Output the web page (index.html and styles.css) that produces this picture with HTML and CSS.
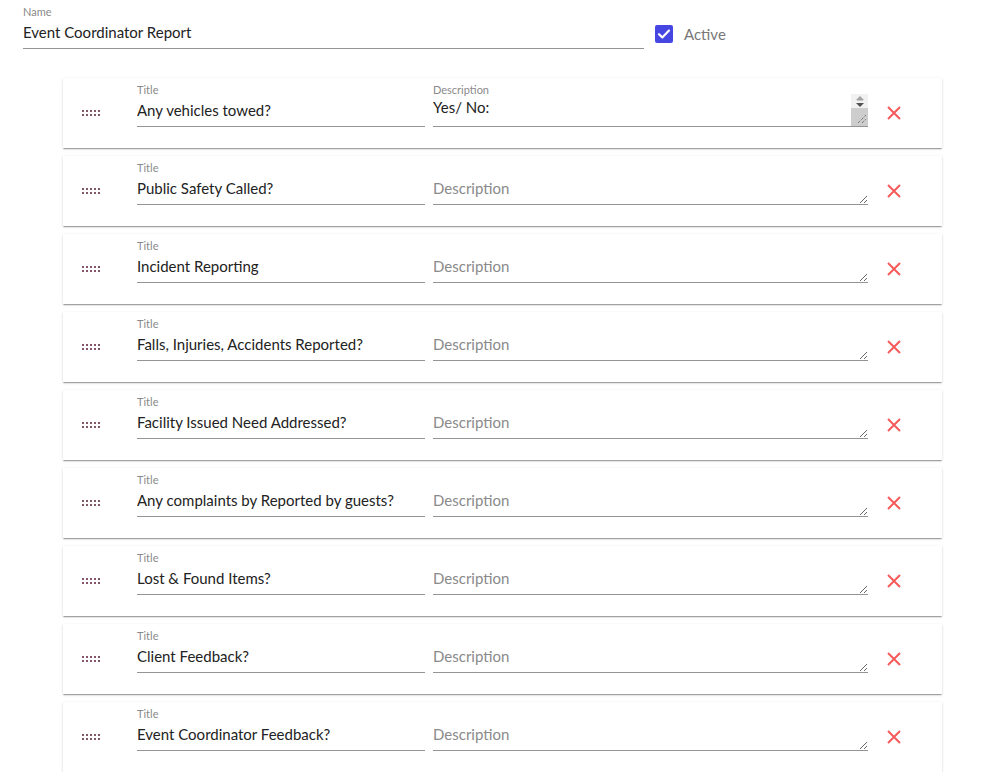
FILE: index.html
```html
<!DOCTYPE html>
<html lang="en">
<head>
  <meta charset="UTF-8">
  <meta name="viewport" content="width=device-width, initial-scale=1.0">
  <title>Event Coordinator Report</title>
  <link rel="stylesheet" href="styles.css">
</head>
<body>
<div class="header">
  <div class="field name-field">
    <label class="field-label" for="name">Name</label>
    <input id="name" class="field-input" type="text" value="Event Coordinator Report">
  </div>
  <label class="active-toggle">
    <span class="checkbox">
      <svg viewBox="0 0 18 18" width="18" height="18"><path d="M4 9.2l3.3 3.2L14 5.6" fill="none" stroke="#fff" stroke-width="2.2" stroke-linecap="round" stroke-linejoin="round"/></svg>
    </span>
    <span class="active-text">Active</span>
  </label>
</div>

<div class="question-list" id="questions"></div>

<script>
  // Domande del report
  const questions = [
    { title: "Any vehicles towed?", description: "Yes/ No:", scroll: true },
    { title: "Public Safety Called?", description: "" },
    { title: "Incident Reporting", description: "" },
    { title: "Falls, Injuries, Accidents Reported?", description: "" },
    { title: "Facility Issued Need Addressed?", description: "" },
    { title: "Any complaints by Reported by guests?", description: "" },
    { title: "Lost & Found Items?", description: "" },
    { title: "Client Feedback?", description: "" },
    { title: "Event Coordinator Feedback?", description: "" },
  ];

  const list = document.getElementById("questions");

  const scrollbar = `
    <div class="fake-scrollbar">
      <div class="scroll-buttons">
        <span class="arrow-up"></span>
        <span class="arrow-down"></span>
      </div>
      <div class="scroll-thumb">
        <svg viewBox="0 0 10 10" width="10" height="10"><path d="M1 9L9 1M5 9L9 5" stroke="#555" stroke-width="1" stroke-dasharray="1 1"/></svg>
      </div>
    </div>`;

  questions.forEach((q) => {
    const card = document.createElement("div");
    card.className = "question-card";
    card.innerHTML = `
      <div class="drag-handle"></div>
      <div class="field title-field">
        <label class="field-label">Title</label>
        <input class="field-input" type="text" value="${q.title}">
      </div>
      <div class="field desc-field">
        <label class="field-label ${q.description ? "" : "hidden"}">Description</label>
        <textarea class="field-textarea ${q.scroll ? "top" : ""}" rows="1" placeholder="Description"></textarea>
        ${q.scroll ? scrollbar : ""}
      </div>
      <button class="remove-button" type="button" aria-label="Remove">
        <svg viewBox="0 0 16 16" width="16" height="16"><path d="M2 2L14 14M14 2L2 14" stroke="#f55a5a" stroke-width="2" fill="none"/></svg>
      </button>
    `;
    card.querySelector("textarea").value = q.description;
    list.appendChild(card);
  });
</script>
</body>
</html>
```

FILE: styles.css
```css
body {
  font-family: Lato, "Noto Sans", sans-serif;
  margin: 0;
  padding: 0;
  background-color: #fff;
  color: #222;
}

.header {
  display: flex;
  align-items: flex-start;
  padding: 6px 0 0 23px;
}

.field {
  display: flex;
  flex-direction: column;
  position: relative;
}

.field-label {
  font-size: 11px;
  line-height: 12px;
  height: 12px;
  color: #8a8a8a;
}

.field-label.hidden {
  visibility: hidden;
}

.field-input,
.field-textarea {
  font-family: inherit;
  font-size: 15px;
  color: #222;
  border: none;
  border-bottom: 1px solid #949494;
  background: transparent;
  outline: none;
  padding: 0;
  margin: 0;
  box-sizing: border-box;
}

.field-input {
  height: 31px;
  padding-bottom: 3px;
}

.field-textarea {
  height: 31px;
  line-height: 20px;
  padding-top: 4px;
  resize: vertical;
  overflow: hidden;
}

.field-textarea.top {
  padding-top: 1px;
}

.field-textarea::placeholder {
  color: #8a8a8a;
}

.fake-scrollbar {
  position: absolute;
  right: 0;
  top: 10px;
  width: 17px;
  height: 32px;
  display: flex;
  flex-direction: column;
}

.scroll-buttons {
  height: 14px;
  background-color: #f1f1f1;
  display: flex;
  flex-direction: column;
  align-items: center;
  justify-content: center;
  gap: 3px;
}

.arrow-up {
  width: 0;
  height: 0;
  border-left: 4px solid transparent;
  border-right: 4px solid transparent;
  border-bottom: 4px solid #a3a3a3;
  padding-bottom: 1px;
  box-shadow: 0 2px 0 -1px #c4c4c4;
}

.arrow-down {
  width: 0;
  height: 0;
  border-left: 4px solid transparent;
  border-right: 4px solid transparent;
  border-top: 4px solid #505050;
}

.scroll-thumb {
  flex: 1;
  background-color: #cdcdcd;
  display: flex;
  align-items: flex-end;
  justify-content: flex-end;
  padding: 0 1px 2px 0;
}

.name-field {
  width: 621px;
}

.active-toggle {
  display: flex;
  align-items: center;
  margin: 19px 0 0 11px;
}

.checkbox {
  display: flex;
  width: 18px;
  height: 18px;
  border-radius: 2px;
  background-color: #4646e2;
}

.active-text {
  margin-left: 11px;
  font-size: 15px;
  color: #777;
}

.question-list {
  display: flex;
  flex-direction: column;
  gap: 8px;
  width: 879px;
  margin: 29px 0 0 63px;
}

.question-card {
  display: flex;
  align-items: flex-start;
  height: 70px;
  box-sizing: border-box;
  padding: 6px 0 0 18px;
  background-color: #fff;
  box-shadow: 0 2px 1px -1px rgba(0, 0, 0, 0.2), 0 1px 1px 0 rgba(0, 0, 0, 0.14), 0 1px 3px 0 rgba(0, 0, 0, 0.12);
}

.drag-handle {
  width: 20px;
  height: 8px;
  margin: 25px 36px 0 0;
  background-image: radial-gradient(circle, #84566a 0.8px, transparent 1.2px);
  background-size: 4px 4px;
}

.title-field {
  width: 288px;
  margin-right: 8px;
}

.desc-field {
  width: 435px;
}

.remove-button {
  display: flex;
  border: none;
  background: transparent;
  padding: 0;
  margin: 21px 0 0 18px;
  cursor: pointer;
}
```
